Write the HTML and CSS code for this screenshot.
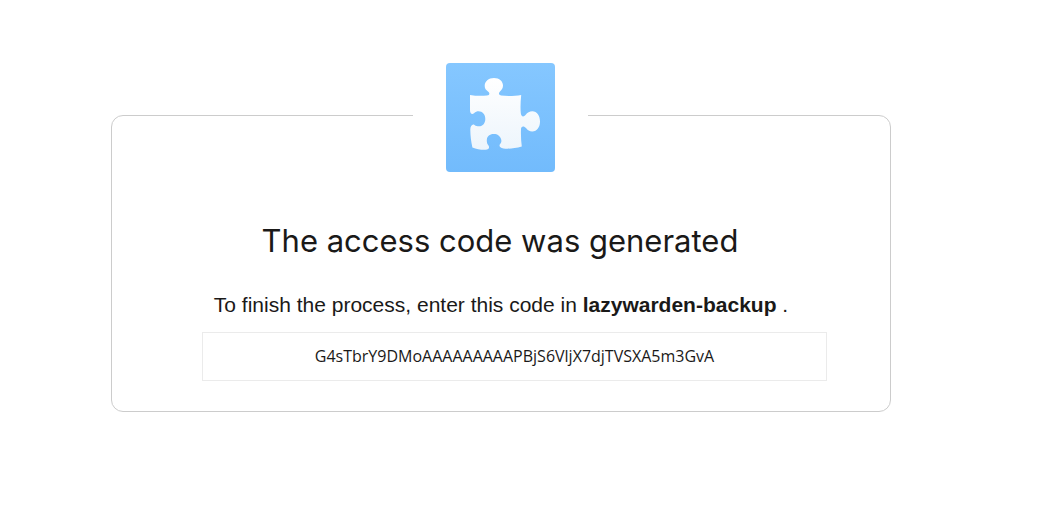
FILE: index.html
```html
<!DOCTYPE html>
<html lang="en">
<head>
<meta charset="utf-8">
<meta name="viewport" content="width=device-width, initial-scale=1">
<title>Access code</title>
<link rel="stylesheet" href="styles.css">
</head>
<body>
<main class="page">
  <section class="card">
    <div class="app-icon">
      <svg class="app-icon-art" viewBox="0 0 109 109" role="img" aria-label="App">
        <defs>
          <linearGradient id="tile" x1="0" y1="0" x2="0" y2="1">
            <stop offset="0" stop-color="#85c7ff"/>
            <stop offset="1" stop-color="#72bbfc"/>
          </linearGradient>
          <linearGradient id="piece" x1="0" y1="0" x2="0" y2="1">
            <stop offset="0" stop-color="#ffffff"/>
            <stop offset="1" stop-color="#edf5fc"/>
          </linearGradient>
        </defs>
        <rect width="109" height="109" rx="4" fill="url(#tile)"/>
        <path fill="url(#piece)" d="M24 32C30 33 36 33 41 32.500C44 32 44 30 42 28.500C40 27 38.700 25.500 38.700 23C38.700 18.500 42.500 15 48 15C53.500 15 57 18.500 57 22.500C57 25.500 55.500 27 54 28.500C52.500 30 52.500 32 55 32.500C61 33.300 69 33 75.200 32C74.500 39 74.300 45 74.800 50C75 53.500 77.500 54.500 79.500 52C81.500 49.500 83.500 48.300 86.300 48.300C91 48.300 94 53 94 58.500C94 64 91 68.500 86.300 68.500C83.500 68.500 81.500 67 80 65C78 62.500 75 63 75 66C74.800 72 75 78 75.800 83.500C69 85.500 63 86 57.500 85.500C53.500 85 52.500 82.500 54.500 80.500C56 79 55.500 76 54 74C52 71.500 50.500 71 47.500 71C43.500 71 41.500 73.500 41 75.500C40.500 78.500 41 80.500 42.200 82C44 84.500 43 86.500 39.500 86.800C35 87 30.500 86 26.400 84.500C25 78 24.400 73 24.300 66.500C24.300 63 26.500 60.500 28.500 62C30 63.200 31 63.300 33 63.300C37 63.300 39.300 60 39.300 56C39.300 51.500 36.500 48.300 32.500 48.300C31 48.300 29.500 48.800 28 50.200C26 52 24 50.500 24 47Z"/>
      </svg>
    </div>
    <h1 class="title">The access code was generated</h1>
    <label class="hint" for="code">To finish the process, enter this code in <strong>lazywarden-backup</strong> .</label>
    <input class="code" id="code" type="text" readonly value="G4sTbrY9DMoAAAAAAAAAPBjS6VljX7djTVSXA5m3GvA">
  </section>
</main>
</body>
</html>
```
FILE: styles.css
```css
* { box-sizing: border-box; }

body {
  margin: 0;
  background: #fff;
  color: #1a1918;
  font-family: "Liberation Sans", Arial, sans-serif;
}

.page {
  padding: 115px 165px 32px 111px;
}

.card {
  display: flex;
  flex-direction: column;
  align-items: center;
  max-width: 780px;
  padding: 0 63px 30px 90px;
  border: 1px solid #ccc;
  border-radius: 12px;
}

.app-icon {
  margin: -53px 29px 0 0;
  padding: 0 33px;
  background: #fff;
}

.app-icon-art {
  display: block;
  width: 109px;
  height: 109px;
}

.title {
  margin: 49px 29px 0 0;
  font-family: Inter, sans-serif;
  font-size: 31px;
  font-weight: 400;
  line-height: 40px;
  white-space: nowrap;
}

.hint {
  margin: 30px 27px 13px 0;
  font-size: 21px;
  line-height: 28px;
  white-space: nowrap;
}

.hint strong { font-weight: 700; }

.code {
  width: 100%;
  height: 49px;
  padding: 0 12px 2px;
  border: 1px solid #ebebeb;
  background: #fff;
  color: #1a1918;
  font-family: "Open Sans", sans-serif;
  font-size: 16px;
  text-align: center;
}
```
